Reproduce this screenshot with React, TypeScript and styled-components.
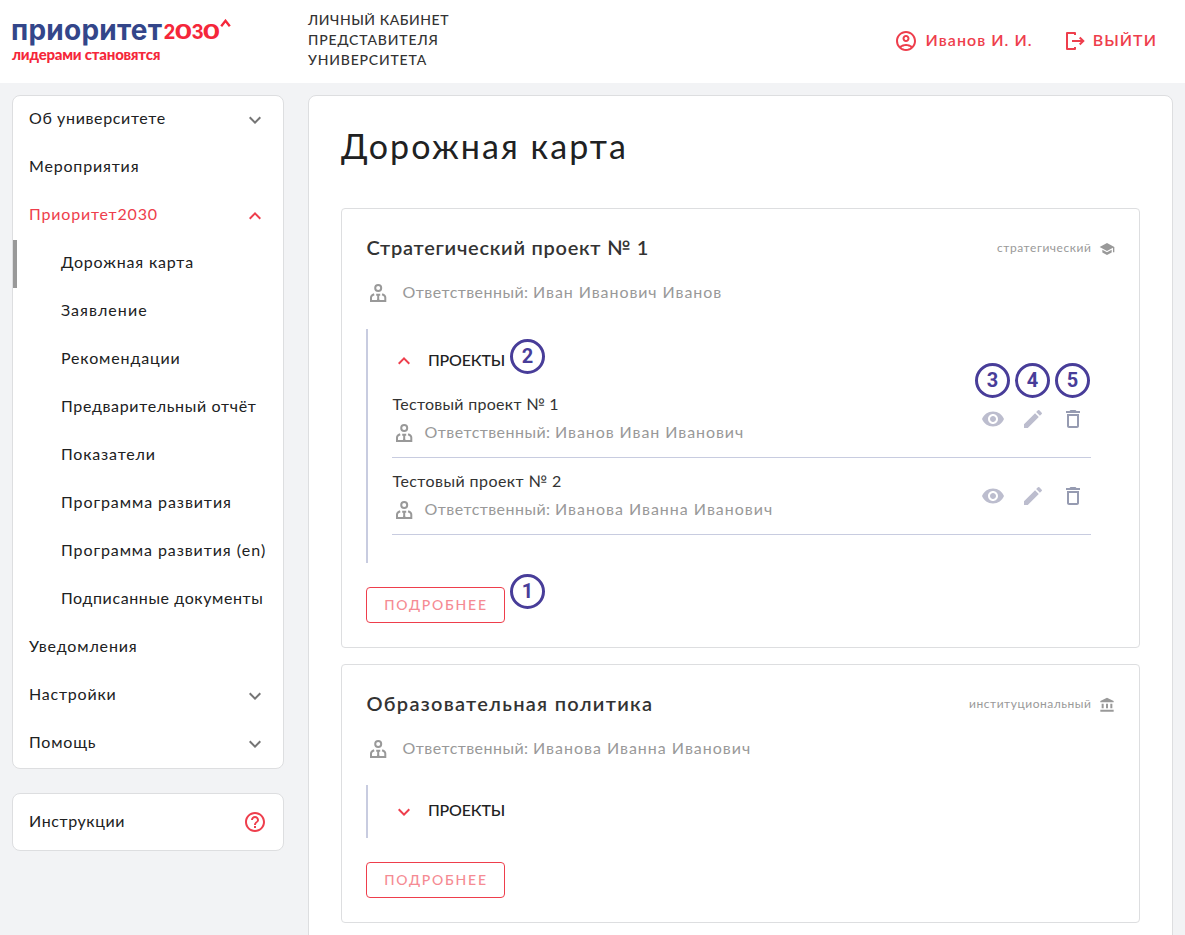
import React from 'react';
import styled, { createGlobalStyle } from 'styled-components';
import {
  MdAccountBalance,
  MdDeleteOutline,
  MdEdit,
  MdExpandLess,
  MdExpandMore,
  MdHelpOutline,
  MdOutlineAccountCircle,
  MdSchool,
  MdVisibility,
} from 'react-icons/md';

const colors = {
  red: '#ee3e4c',
  page: '#f2f3f5',
  border: '#dddee0',
  text: '#202122',
  muted: '#999999',
  rule: '#c8cce0',
  badge: '#483d99',
};

const GlobalStyle = createGlobalStyle`
  * { box-sizing: border-box; }
  body {
    margin: 0;
    background: ${colors.page};
    color: ${colors.text};
    font-family: Lato, "Noto Sans", sans-serif;
    font-size: 16px;
    overflow: hidden;
  }
`;

const Page = styled.div`
  height: 935px;
  overflow: hidden;
`;

const Header = styled.header`
  display: flex;
  align-items: flex-start;
  height: 83px;
  padding: 0 28px 0 12px;
  background: #fff;
`;

const Logo = styled.div`
  width: 296px;
  padding-top: 13px;
`;

const LogoName = styled.div`
  display: flex;
  align-items: baseline;
  height: 32px;
  margin-left: -1px;
  font: 700 28px/34px Inter, sans-serif;
  letter-spacing: 0.24px;
  color: #33468a;
`;

const LogoYear = styled.span`
  display: flex;
  margin-left: 2px;
  font: 700 20.5px/34px Inter, sans-serif;
  letter-spacing: 0;
  color: #f5273a;
`;

const Digit = styled.span<{ $wide?: boolean }>`
  display: flex;
  justify-content: center;
  width: ${(p) => (p.$wide ? 16.5 : 11)}px;
  padding-bottom: 1px;
  transform: translateY(-1px) scaleX(${(p) => (p.$wide ? 1.28 : 0.92)});
`;

const Caret = styled.svg`
  align-self: flex-start;
  margin: 6px 0 0 1px;
`;

const Tagline = styled.div`
  font-size: 15px;
  font-weight: 900;
  line-height: 18px;
  letter-spacing: -0.22px;
  color: #f5273a;
`;

const CabinetName = styled.div`
  flex: 1;
  padding-top: 10px;
  font-size: 14px;
  font-weight: 500;
  line-height: 20px;
  color: #333;
`;

const Line = styled.div<{ $tracking?: number }>`
  letter-spacing: ${(p) => p.$tracking ?? 0}px;
  white-space: nowrap;
`;

const HeaderLink = styled.a<{ $tracking: number }>`
  display: flex;
  align-items: center;
  gap: 8px;
  height: 82px;
  margin-left: 32px;
  color: ${colors.red};
  font-weight: 600;
  letter-spacing: ${(p) => p.$tracking}px;
  white-space: nowrap;
  svg { flex: none; }
`;

const Lifted = styled.span<{ $by: number }>`
  margin-bottom: ${(p) => p.$by * 2}px;
`;

const Layout = styled.div`
  display: grid;
  grid-template-columns: 272px 865px;
  column-gap: 24px;
  align-items: start;
  padding: 12px;
`;

const Sidebar = styled.aside`
  display: flex;
  flex-direction: column;
  gap: 24px;
`;

const Panel = styled.nav`
  border: 1px solid ${colors.border};
  border-radius: 8px;
  background: #fff;
`;

const NavItem = styled.a<{ $child?: boolean; $active?: boolean; $open?: boolean; $tall?: boolean }>`
  display: flex;
  align-items: center;
  justify-content: space-between;
  height: ${(p) => (p.$tall ? 56 : 48)}px;
  padding: 0 16px 0 ${(p) => (p.$child ? 44 : 12)}px;
  border-left: 4px solid ${(p) => (p.$active ? '#999' : 'transparent')};
  color: ${(p) => (p.$open ? colors.red : colors.text)};
  svg { flex: none; color: ${(p) => (p.$open || p.$tall ? colors.red : '#757575')}; }
`;

const NavLabel = styled.span<{ $tracking: number; $lift?: number }>`
  margin-bottom: ${(p) => p.$lift ?? 5}px;
  line-height: 24px;
  letter-spacing: ${(p) => p.$tracking}px;
  white-space: nowrap;
`;

const Content = styled.main`
  min-height: 900px;
  padding: 32px;
  border: 1px solid ${colors.border};
  border-radius: 8px;
  background: #fff;
`;

const Title = styled.h1`
  margin: -2px 0 42px;
  height: 40px;
  font-size: 34px;
  font-weight: 400;
  line-height: 40px;
  letter-spacing: 2.07px;
`;

const Card = styled.section`
  margin-bottom: 16px;
  padding: 24px;
  border: 1px solid ${colors.border};
  border-radius: 4px;
`;

const CardHead = styled.div`
  display: flex;
  justify-content: space-between;
  height: 32px;
`;

const CardTitle = styled.h2<{ $tracking: number }>`
  margin: 0;
  padding-left: 0.5px;
  font-size: 20px;
  font-weight: 600;
  line-height: 28px;
  letter-spacing: ${(p) => p.$tracking}px;
  color: #333;
`;

const Tag = styled.div<{ $tracking: number }>`
  display: flex;
  align-items: center;
  gap: 7.5px;
  height: 30px;
  color: ${colors.muted};
  font-size: 12px;
  line-height: 16px;
  letter-spacing: ${(p) => p.$tracking}px;
  svg { margin-top: 2px; }
`;

const OwnerLine = styled.div<{ $gap: number; $tracking: number }>`
  display: flex;
  align-items: center;
  gap: ${(p) => p.$gap}px;
  height: 24px;
  padding-left: 3px;
  color: ${colors.muted};
  letter-spacing: ${(p) => p.$tracking}px;
  white-space: nowrap;
  svg { flex: none; }
`;

const OwnerCaption = styled.span`
  letter-spacing: 0.44px;
`;

const CardOwner = styled.div`
  padding-top: 16px;
  height: 40px;
`;

const Projects = styled.div<{ $open?: boolean }>`
  margin: 24px 0;
  padding: 0 24px ${(p) => (p.$open ? 28 : 0)}px;
  border-left: 2px solid ${colors.rule};
`;

const ProjectsHead = styled.div<{ $open?: boolean }>`
  position: relative;
  display: flex;
  align-items: center;
  gap: 12px;
  height: ${(p) => (p.$open ? 52 : 53)}px;
  padding-top: ${(p) => (p.$open ? 12 : 0)}px;
  font-weight: 500;
  letter-spacing: -0.2px;
  svg { color: ${colors.red}; }
`;

const ProjectRow = styled.div`
  display: flex;
  justify-content: space-between;
  align-items: center;
  height: 77px;
  padding-right: 6px;
  border-bottom: 1px solid ${colors.rule};
`;

const ProjectTitle = styled.div<{ $tracking: number }>`
  height: 29px;
  padding-left: 0.5px;
  line-height: 24px;
  letter-spacing: ${(p) => p.$tracking}px;
  color: #333;
`;

const ProjectInfo = styled.div`
  height: 54px;
`;

const Actions = styled.div`
  display: flex;
  gap: 16px;
`;

const Action = styled.span<{ $dark?: boolean }>`
  position: relative;
  display: flex;
  color: ${(p) => (p.$dark ? '#969bb1' : '#bcbdce')};
`;

const Badge = styled.span<{ $x: number; $y: number }>`
  position: absolute;
  left: ${(p) => p.$x}px;
  top: ${(p) => p.$y}px;
  width: 35px;
  height: 35px;
  border: 3px solid ${colors.badge};
  border-radius: 50%;
  background: #fff;
  color: ${colors.badge};
  font: 700 20px/29px Roboto, sans-serif;
  letter-spacing: 0;
  text-align: center;
`;

const ButtonHolder = styled.div`
  position: relative;
  height: 36px;
`;

const MoreButton = styled.button`
  display: block;
  width: 139px;
  height: 36px;
  padding: 0 0 0 1px;
  border: 1px solid ${colors.red};
  border-radius: 4px;
  background: #fff;
  color: #f58b93;
  font: 500 14px/34px Lato, sans-serif;
  letter-spacing: 1.8px;
`;

const PersonIcon = () => (
  <svg width="18" height="20" viewBox="0 0 18 20" fill="none" stroke="currentColor" strokeWidth="2">
    <circle cx="9.200" cy="5" r="3" />
    <path d="M5.200 11.200C3 12 2 12.600 2 14.500V18h14.300v-3.500c0-1.900-1-2.500-3.200-3.300" />
    <path d="M7.200 11.700h4M9.200 11.500V18" />
    <path d="M7.400 17.500l1.800-2.200 1.800 2.200z" fill="currentColor" stroke="none" />
  </svg>
);

const LogoutIcon = () => (
  <svg width="20" height="20" viewBox="0 0 20 20" fill="none" stroke="currentColor" strokeWidth="2">
    <path d="M10 4V2H2v16h8v-2" strokeLinejoin="round" />
    <path d="M7 10h11.500M14.700 6.500L18.300 10l-3.600 3.500" />
  </svg>
);

const Owner = ({ name, tracking, gap }: { name: string; tracking: number; gap: number }) => (
  <OwnerLine $gap={gap} $tracking={tracking}>
    <PersonIcon />
    <Lifted $by={2}>
      <OwnerCaption>Ответственный: </OwnerCaption>
      {name}
    </Lifted>
  </OwnerLine>
);

type Item = { label: string; tracking: number; child?: boolean; active?: boolean; arrow?: 'up' | 'down' };

const navItems: Item[] = [
  { label: 'Об университете', tracking: 0.64, arrow: 'down' },
  { label: 'Мероприятия', tracking: 0.82 },
  { label: 'Приоритет2030', tracking: 0.81, arrow: 'up' },
  { label: 'Дорожная карта', tracking: 0.83, child: true, active: true },
  { label: 'Заявление', tracking: 1.03, child: true },
  { label: 'Рекомендации', tracking: 0.86, child: true },
  { label: 'Предварительный отчёт', tracking: 0.66, child: true },
  { label: 'Показатели', tracking: 0.82, child: true },
  { label: 'Программа развития', tracking: 0.92, child: true },
  { label: 'Программа развития (en)', tracking: 0.91, child: true },
  { label: 'Подписанные документы', tracking: 0.6, child: true },
  { label: 'Уведомления', tracking: 0.84 },
  { label: 'Настройки', tracking: 0.8, arrow: 'down' },
  { label: 'Помощь', tracking: 0.8, arrow: 'down' },
];

const projects = [
  { title: 'Тестовый проект № 1', tracking: 0.28, owner: 'Иванов Иван Иванович', ownerTracking: 0.92, badges: ['3', '4', '5'] },
  { title: 'Тестовый проект № 2', tracking: 0.43, owner: 'Иванова Иванна Иванович', ownerTracking: 0.98, badges: [] },
];

export default function App() {
  return (
    <Page>
      <GlobalStyle />
      <Header>
        <Logo>
          <LogoName>
            приоритет
            <LogoYear>
              <Digit>2</Digit>
              <Digit $wide>0</Digit>
              <Digit>3</Digit>
              <Digit $wide>0</Digit>
            </LogoYear>
            <Caret width="11" height="8" viewBox="0 0 11 8" fill="none" stroke="#f5273a" strokeWidth="2.4">
              <path d="M1.200 7.200L5.500 1.800l4.300 5.400" />
            </Caret>
          </LogoName>
          <Tagline>лидерами становятся</Tagline>
        </Logo>
        <CabinetName>
          <Line $tracking={0.55}>ЛИЧНЫЙ КАБИНЕТ</Line>
          <Line $tracking={0.85}>ПРЕДСТАВИТЕЛЯ</Line>
          <Line $tracking={0.82}>УНИВЕРСИТЕТА</Line>
        </CabinetName>
        <HeaderLink $tracking={1.05}>
          <MdOutlineAccountCircle size={24} />
          <Lifted $by={1.5}>Иванов И. И.</Lifted>
        </HeaderLink>
        <HeaderLink $tracking={1.05}>
          <LogoutIcon />
          <Lifted $by={1.5}>ВЫЙТИ</Lifted>
        </HeaderLink>
      </Header>
      <Layout>
        <Sidebar>
          <Panel>
            {navItems.map((item) => (
              <NavItem key={item.label} $child={item.child} $active={item.active} $open={item.arrow === 'up'}>
                <NavLabel $tracking={item.tracking}>{item.label}</NavLabel>
                {item.arrow === 'down' && <MdExpandMore size={24} />}
                {item.arrow === 'up' && <MdExpandLess size={24} />}
              </NavItem>
            ))}
          </Panel>
          <Panel>
            <NavItem $tall>
              <NavLabel $tracking={0.58} $lift={2}>Инструкции</NavLabel>
              <MdHelpOutline size={24} />
            </NavItem>
          </Panel>
        </Sidebar>
        <Content>
          <Title>Дорожная карта</Title>
          <Card>
            <CardHead>
              <CardTitle $tracking={0.73}>Стратегический проект № 1</CardTitle>
              <Tag $tracking={0.56}>
                стратегический
                <MdSchool size={16} />
              </Tag>
            </CardHead>
            <CardOwner>
              <Owner gap={15.5} tracking={0.92} name="Иван Иванович Иванов" />
            </CardOwner>
            <Projects $open>
              <ProjectsHead $open>
                <MdExpandLess size={24} />
                <Lifted $by={1.5}>ПРОЕКТЫ</Lifted>
                <Badge $x={118} $y={10}>2</Badge>
              </ProjectsHead>
              {projects.map((project) => (
                <ProjectRow key={project.title}>
                  <ProjectInfo>
                    <ProjectTitle $tracking={project.tracking}>{project.title}</ProjectTitle>
                    <Owner gap={11.5} tracking={project.ownerTracking} name={project.owner} />
                  </ProjectInfo>
                  <Actions>
                    {[MdVisibility, MdEdit, MdDeleteOutline].map((Icon, i) => (
                      <Action key={i} $dark={i === 2}>
                        <Icon size={24} />
                        {project.badges[i] && <Badge $x={-6} $y={-44}>{project.badges[i]}</Badge>}
                      </Action>
                    ))}
                  </Actions>
                </ProjectRow>
              ))}
            </Projects>
            <ButtonHolder>
              <MoreButton>ПОДРОБНЕЕ</MoreButton>
              <Badge $x={144} $y={-13}>1</Badge>
            </ButtonHolder>
          </Card>
          <Card>
            <CardHead>
              <CardTitle $tracking={1.28}>Образовательная политика</CardTitle>
              <Tag $tracking={0.53}>
                институциональный
                <MdAccountBalance size={16} />
              </Tag>
            </CardHead>
            <CardOwner>
              <Owner gap={15.5} tracking={0.98} name="Иванова Иванна Иванович" />
            </CardOwner>
            <Projects>
              <ProjectsHead>
                <MdExpandMore size={24} />
                <Lifted $by={2}>ПРОЕКТЫ</Lifted>
              </ProjectsHead>
            </Projects>
            <ButtonHolder>
              <MoreButton>ПОДРОБНЕЕ</MoreButton>
            </ButtonHolder>
          </Card>
        </Content>
      </Layout>
    </Page>
  );
}
